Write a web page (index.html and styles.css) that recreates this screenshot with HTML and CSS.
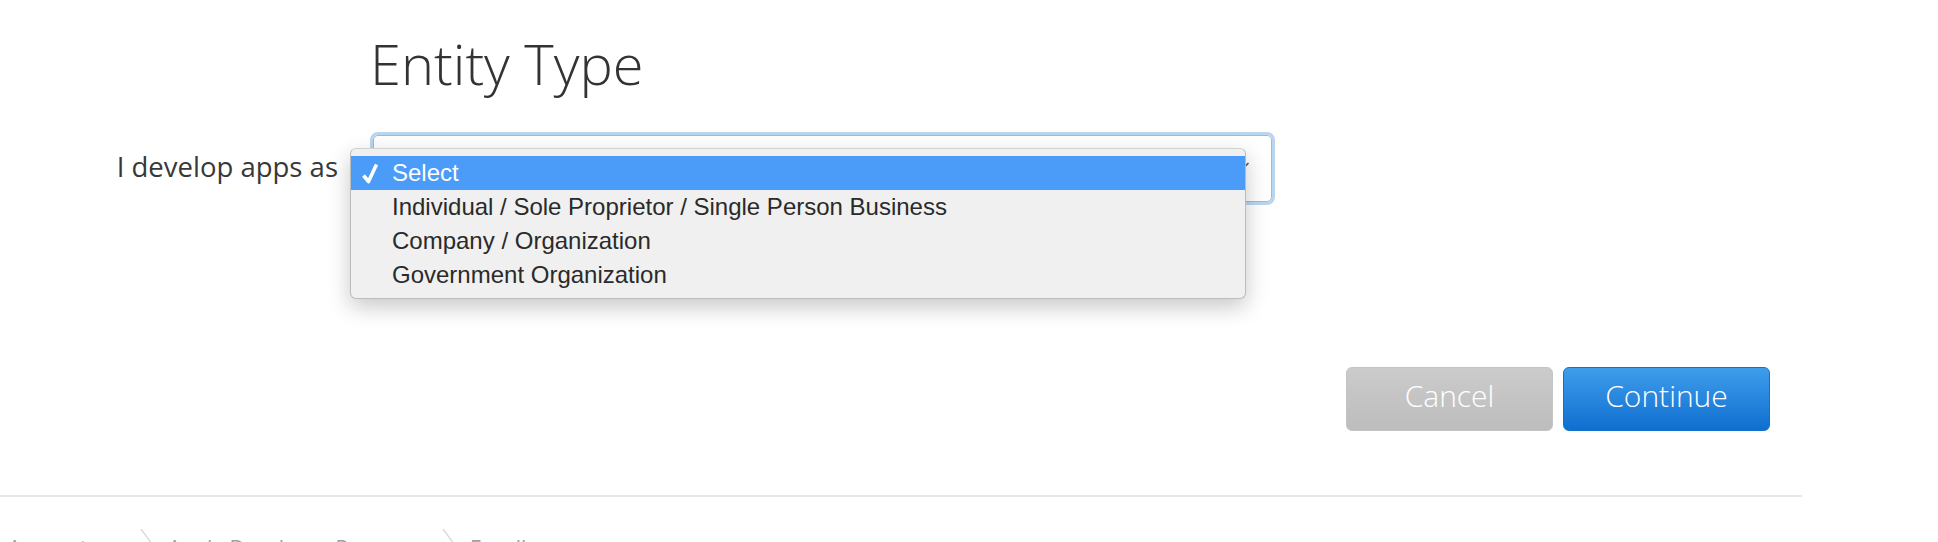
FILE: index.html
```html
<!DOCTYPE html>
<html lang="en">

<head>
  <meta charset="UTF-8" />
  <meta name="viewport" content="width=device-width, initial-scale=1.0" />
  <title>Entity Type</title>
  <link rel="stylesheet" href="styles.css">
</head>

<body>
  <!-- 页面主体 -->
  <main class="page">
    <!-- 表单区域 -->
    <section class="form">
      <h1 class="title">Entity Type</h1>

      <label class="label">I develop apps as</label>
      <div class="field">
        <div class="field-box">
          <svg class="caret" width="14" height="10" viewBox="0 0 14 10">
            <path d="M1.5 2 L7 7.5 L12.5 2" fill="none" stroke="#555" stroke-width="1.6" />
          </svg>
        </div>

        <!-- 展开的下拉菜单 -->
        <ul class="menu">
          <li class="menu-item on">
            <svg class="check" width="18" height="22" viewBox="0 0 18 22">
              <path d="M2.5 13.5 L7.5 19.5 L15.5 2.5" fill="none" stroke="#fff" stroke-width="3.6" stroke-linejoin="round" />
            </svg>
            Select
          </li>
          <li class="menu-item">Individual / Sole Proprietor / Single Person Business</li>
          <li class="menu-item">Company / Organization</li>
          <li class="menu-item">Government Organization</li>
        </ul>
      </div>
    </section>

    <!-- 操作按钮 -->
    <div class="actions">
      <button class="btn btn-cancel">Cancel</button>
      <button class="btn btn-continue">Continue</button>
    </div>

    <!-- 面包屑 -->
    <nav class="crumbs">
      <span class="crumb crumb-first">Account</span>
      <svg class="sep" width="14" height="30" viewBox="0 0 14 30">
        <path d="M1 0 L12 15 L1 30" fill="none" stroke="#d6d6d6" stroke-width="1.3" />
      </svg>
      <span class="crumb crumb-mid">Apple Developer Program</span>
      <svg class="sep" width="14" height="30" viewBox="0 0 14 30">
        <path d="M1 0 L12 15 L1 30" fill="none" stroke="#d6d6d6" stroke-width="1.3" />
      </svg>
      <span class="crumb">Enroll</span>
    </nav>
  </main>
</body>

</html>
```

FILE: styles.css
```css
/* 页面基础 */
html,
body {
  margin: 0;
  height: 542px;
  overflow: hidden;
  background: #fff;
  color: #333;
  font-family: "Open Sans", "Liberation Sans", sans-serif;
}

/* 内容宽度 */
.page {
  width: 1802px;
  padding-top: 30px;
}

/* 标签列 + 输入列 */
.form {
  display: grid;
  grid-template-columns: 338px 905px;
  column-gap: 32px;
  row-gap: 35px;
  align-items: center;
}

/* 大标题 */
.title {
  grid-column: 2;
  margin: 0;
  font-size: 56px;
  line-height: 67px;
  font-weight: 300;
  color: #333;
}

/* 左侧说明文字 */
.label {
  margin-top: -4px;
  text-align: right;
  font-size: 27.5px;
  font-weight: 400;
  color: #383838;
}

/* 选择框（带聚焦光圈） */
.field {
  position: relative;
  height: 73px;
  box-sizing: border-box;
  border: 3px solid #bad6ee;
  border-radius: 8px;
}

.field-box {
  display: flex;
  align-items: center;
  justify-content: flex-end;
  height: 100%;
  box-sizing: border-box;
  padding-right: 21px;
  border: 1px solid #98bddf;
  border-radius: 5px;
  background: #fff;
}

.caret {
  margin-top: -6px;
}

/* 下拉菜单 */
.menu {
  position: absolute;
  left: -23px;
  top: 13px;
  z-index: 2;
  width: 896px;
  box-sizing: border-box;
  margin: 0;
  padding: 7px 0 6px;
  list-style: none;
  background: #f0f0f0;
  border: 1px solid #bcbcbc;
  border-top-color: #d2d2d2;
  border-radius: 6px;
  box-shadow: 0 8px 22px rgba(0, 0, 0, 0.22);
  font-family: "Liberation Sans", Arial, sans-serif;
  font-size: 24px;
  color: #2a2a2a;
}

.menu-item {
  position: relative;
  height: 34px;
  line-height: 34px;
  padding-left: 41px;
}

/* 当前选中项 */
.menu-item.on {
  background: #4b9bf8;
  color: #fff;
}

.check {
  position: absolute;
  left: 10px;
  top: 6px;
}

/* 按钮行 */
.actions {
  display: flex;
  justify-content: flex-end;
  gap: 10px;
  margin-top: 162px;
  padding-right: 32px;
  padding-bottom: 64px;
  border-bottom: 2px solid #e6e6e6;
}

.btn {
  width: 207px;
  height: 64px;
  padding: 0 0 7px;
  border-radius: 6px;
  font-family: "Open Sans", sans-serif;
  font-size: 30px;
  font-weight: 300;
  color: #fff;
  cursor: pointer;
}

.btn-cancel {
  border: 1px solid #c4c4c4;
  background: linear-gradient(#cbcbcb, #bdbdbd);
}

.btn-continue {
  border: 1px solid #1470cc;
  background: linear-gradient(#3f9deb, #0f6fd0);
}

/* 底部面包屑 */
.crumbs {
  display: flex;
  align-items: flex-start;
  gap: 14px;
  margin-top: 32px;
  padding-left: 8px;
  font-size: 21px;
  line-height: 28px;
  color: #a0a0a0;
}

.crumb {
  margin-top: 5px;
}

.crumb-first {
  width: 118px;
}

.crumb-mid {
  width: 260px;
}
```
